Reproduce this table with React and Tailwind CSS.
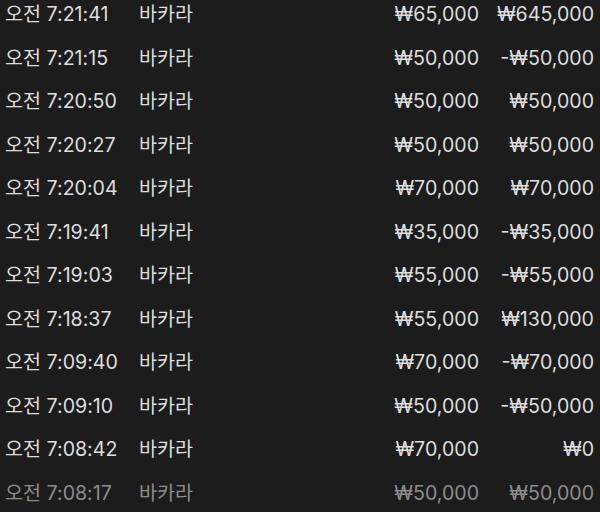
const rows = [
  ["오전 7:21:41", "바카라", "₩65,000", "₩645,000"],
  ["오전 7:21:15", "바카라", "₩50,000", "-₩50,000"],
  ["오전 7:20:50", "바카라", "₩50,000", "₩50,000"],
  ["오전 7:20:27", "바카라", "₩50,000", "₩50,000"],
  ["오전 7:20:04", "바카라", "₩70,000", "₩70,000"],
  ["오전 7:19:41", "바카라", "₩35,000", "-₩35,000"],
  ["오전 7:19:03", "바카라", "₩55,000", "-₩55,000"],
  ["오전 7:18:37", "바카라", "₩55,000", "₩130,000"],
  ["오전 7:09:40", "바카라", "₩70,000", "-₩70,000"],
  ["오전 7:09:10", "바카라", "₩50,000", "-₩50,000"],
  ["오전 7:08:42", "바카라", "₩70,000", "₩0"],
  ["오전 7:08:17", "바카라", "₩50,000", "₩50,000"],
];

export default function App() {
  return (
    <div
      className="w-[600px] h-[512px] overflow-hidden bg-[#1c1c1c] text-[19.6px]"
      style={{ fontFamily: '"Inter", "Noto Sans CJK KR", sans-serif' }}
    >
      <div className="mt-[-7px]">
        {rows.map((r, i) => (
          <div
            key={i}
            className={`flex items-center h-[43.5px] pl-[5px] pr-[6px] ${
              i === rows.length - 1 ? "text-[#8c8c8c]" : "text-[#dedede]"
            }`}
          >
            <div className="w-[134px] whitespace-nowrap">{r[0]}</div>
            <div className="flex-1 whitespace-nowrap">{r[1]}</div>
            <div className="text-right whitespace-nowrap">{r[2]}</div>
            <div className="w-[115px] text-right whitespace-nowrap">{r[3]}</div>
          </div>
        ))}
      </div>
    </div>
  );
}
